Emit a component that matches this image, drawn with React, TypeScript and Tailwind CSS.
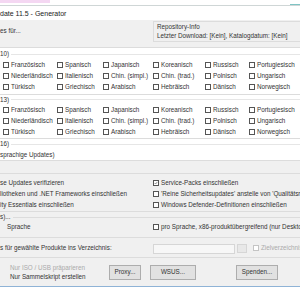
import React from "react";

const LANG_ROWS = [
  ["Französisch", "Spanisch", "Japanisch", "Koreanisch", "Russisch", "Portugiesisch"],
  ["Niederländisch", "Italienisch", "Chin. (simpl.)", "Chin. (trad.)", "Polnisch", "Ungarisch"],
  ["Türkisch", "Griechisch", "Arabisch", "Hebräisch", "Dänisch", "Norwegisch"],
];

function Box({ checked = false, disabled = false }: { checked?: boolean; disabled?: boolean }) {
  return (
    <span
      className={[
        "relative inline-block h-[6px] w-[6px] shrink-0 border bg-white",
        disabled ? "border-[#c4c4c4]" : "border-[#555]",
      ].join(" ")}
    >
      {checked && (
        <svg viewBox="0 0 6 6" className="absolute inset-0 h-full w-full">
          <path d="M1 3.1 L2.4 4.5 L5 1.4" fill="none" stroke="#333" strokeWidth="0.8" />
        </svg>
      )}
    </span>
  );
}

function Check({
  label,
  checked,
  disabled,
}: {
  label: string;
  checked?: boolean;
  disabled?: boolean;
}) {
  return (
    <div className="flex items-center gap-[2px] whitespace-nowrap">
      <Box checked={checked} disabled={disabled} />
      <span className={disabled ? "text-[#aaa]" : "text-[#333]"}>{label}</span>
    </div>
  );
}

function GroupHeader({ label }: { label: string }) {
  return (
    <div className="flex h-[11px] items-center">
      <span className="whitespace-nowrap pr-[2px] text-[#333]">{label}</span>
      <div className="flex-1 border-t border-[#e6e6e6]" />
    </div>
  );
}

function LangGrid() {
  return (
    <div className="flex flex-col pl-[3px]">
      {LANG_ROWS.map((row, i) => (
        <div key={i} className="grid h-[11px] grid-cols-[54px_46px_50px_52px_44px_1fr] items-center">
          {row.map((l) => (
            <Check key={l} label={l} />
          ))}
        </div>
      ))}
    </div>
  );
}

function Button({ label, className = "" }: { label: string; className?: string }) {
  return (
    <div
      className={
        "flex h-[15px] items-center justify-center border border-[#adadad] bg-[#e1e1e1] text-[#333] " +
        className
      }
    >
      {label}
    </div>
  );
}

export default function App() {
  return (
    <div
      className="flex h-[300px] w-[300px] flex-col overflow-hidden bg-white text-[6.3px] leading-none"
      style={{ fontFamily: "'Liberation Sans', Arial, sans-serif" }}
    >
      {/* behind the window */}
      <div className="flex h-[6px] shrink-0 border-b border-[#cfd6d6]">
        <div className="h-[3px] w-[50px] bg-[#f4d7f2]" />
        <div className="flex-1" />
        <div className="mt-[4px] h-[1px] w-[10px] bg-[#7fc4c4]" />
      </div>

      {/* title bar */}
      <div className="flex h-[14px] shrink-0 items-center bg-white pt-[1px] text-[7px] text-[#222]">
        date 11.5 - Generator
      </div>

      {/* window body */}
      <div className="flex flex-1 flex-col bg-[#f0f0f0]">
        {/* top: updates + repository */}
        <div className="flex h-[27px] shrink-0">
          <div className="w-[153px] pt-[8px] text-[#333]">es für...</div>
          <div className="mt-[1px] flex h-[21px] flex-1 flex-col gap-[3px] border border-r-0 border-[#dcdcdc] pl-[3px] pt-[2px] text-[#333]">
            <span>Repository-Info</span>
            <span className="whitespace-nowrap">Letzter Download: [Kein], Katalogdatum: [Kein]</span>
          </div>
        </div>

        {/* tab page */}
        <div className="flex h-[114px] shrink-0 flex-col border-t border-[#dcdcdc] bg-white pt-[1px]">
          <GroupHeader label="10)" />
          <LangGrid />
          <div className="mt-[1px] border-t border-[#dcdcdc]" />
          <GroupHeader label="13)" />
          <LangGrid />
          <div className="border-t border-[#dcdcdc]" />
          <GroupHeader label="16)" />
          <div className="flex h-[11px] items-center whitespace-nowrap text-[#333]">sprachige Updates)</div>
          <div className="border-t border-[#dcdcdc]" />
        </div>

        {/* options */}
        <div className="mt-[12px] border-t border-[#dcdcdc]" />
        <div className="grid grid-cols-[153px_1fr] pt-[4px]">
          <div className="flex flex-col text-[#333]">
            <div className="flex h-[11px] items-center whitespace-nowrap">se Updates verifizieren</div>
            <div className="flex h-[11px] items-center whitespace-nowrap">liotheken und .NET Frameworks einschließen</div>
            <div className="flex h-[11px] items-center whitespace-nowrap">ity Essentials einschließen</div>
          </div>
          <div className="flex flex-col">
            <div className="flex h-[11px] items-center">
              <Check label="Service-Packs einschließen" checked />
            </div>
            <div className="flex h-[11px] items-center">
              <Check label="'Reine Sicherheitsupdates' anstelle von 'Qualitätsrollups'" />
            </div>
            <div className="flex h-[11px] items-center">
              <Check label="Windows Defender-Definitionen einschließen" />
            </div>
          </div>
        </div>
        <div className="border-t border-[#dcdcdc]" />

        {/* ISO */}
        <div className="flex h-[10px] items-center">
          <span className="pr-[2px] text-[#333]">s)...</span>
          <div className="flex-1 border-t border-[#dcdcdc]" />
        </div>
        <div className="grid h-[10px] grid-cols-[153px_1fr] items-center">
          <span className="pl-[7px] text-[#333]">Sprache</span>
          <Check label="pro Sprache, x86-produktübergreifend (nur Desktop-Clients)" />
        </div>
        <div className="mt-[5px] border-t border-[#dcdcdc]" />

        {/* USB */}
        <div className="mt-[5px] grid h-[11px] grid-cols-[153px_84px_1fr] items-center">
          <span className="whitespace-nowrap text-[#333]">s für gewählte Produkte ins Verzeichnis:</span>
          <div className="flex h-[10px] gap-[2px]">
            <div className="h-full w-[82px] border border-[#d6d6d6] bg-[#f7f7f7]" />
          </div>
          <div className="flex items-center gap-[6px]">
            <div className="h-[9px] w-[10px] border border-[#d6d6d6] bg-[#e8e8e8]" />
            <Check label="Zielverzeichnis leeren" disabled />
          </div>
        </div>
        <div className="mt-[3px] border-t border-[#dcdcdc]" />

        {/* bottom */}
        <div className="flex items-center pt-[7px]">
          <div className="flex w-[109px] flex-col gap-[2px] pl-[10px]">
            <span className="whitespace-nowrap text-[#aaa]">Nur ISO / USB präparieren</span>
            <span className="whitespace-nowrap text-[#333]">Nur Sammelskript erstellen</span>
          </div>
          <Button label="Proxy..." className="w-[32px]" />
          <Button label="WSUS..." className="ml-[9px] w-[46px]" />
          <Button label="Spenden..." className="ml-[40px] w-[42px]" />
        </div>
        <div className="mt-[6px] h-[1px] bg-[#8fb3d6]" />
        <div className="flex-1 bg-white" />
      </div>
    </div>
  );
}
